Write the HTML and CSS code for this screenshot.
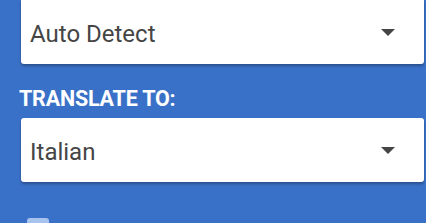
FILE: index.html
```html
<!DOCTYPE html>
<html lang="en">
<head>
    <meta charset="UTF-8">
    <meta name="viewport" content="width=device-width, initial-scale=1.0">
    <title>Translate</title>
    <link rel="stylesheet" href="styles.css">
</head>
<body>
    <div class="panel">
        <!-- Idioma de origen -->
        <div class="select-box first">
            <span class="select-value">Auto Detect</span>
            <span class="select-arrow"></span>
        </div>

        <div class="label">TRANSLATE TO:</div>

        <!-- Idioma de destino -->
        <div class="select-box">
            <span class="select-value">Italian</span>
            <span class="select-arrow"></span>
        </div>

        <div class="option-row">
            <span class="checkbox"></span>
        </div>
    </div>
</body>
</html>
```

FILE: styles.css
```css
html, body {
    margin: 0;
    padding: 0;
}

body {
    background-color: #3a71c8;
    font-family: Roboto, 'Noto Sans', sans-serif;
    width: 426px;
    height: 223px;
    overflow: hidden;
}

.panel {
    padding: 0 2px 0 21px;
}

.select-box {
    display: flex;
    align-items: center;
    justify-content: space-between;
    height: 64px;
    background-color: #ffffff;
    border-radius: 3px;
    box-shadow: 0px 2px 3px rgba(0, 0, 0, 0.3);
    padding: 3px 29px 0 9px;
    box-sizing: border-box;
}

.select-box.first {
    border-radius: 0 0 3px 3px;
}

.select-value {
    font-size: 24px;
    color: #454545;
}

.select-arrow {
    width: 0;
    height: 0;
    margin-bottom: 3px;
    border-left: 7px solid transparent;
    border-right: 7px solid transparent;
    border-top: 7px solid #454545;
}

.label {
    color: #ffffff;
    font-weight: bold;
    font-size: 21.5px;
    line-height: 22px;
    margin: 24px 0 8px -2px;
    letter-spacing: -0.2px;
}

.option-row {
    margin-top: 36px;
    padding-left: 6px;
    height: 5px;
    overflow: hidden;
}

.checkbox {
    display: block;
    width: 22px;
    height: 22px;
    border-radius: 3px;
    background-color: #a9c3ef;
}
```
